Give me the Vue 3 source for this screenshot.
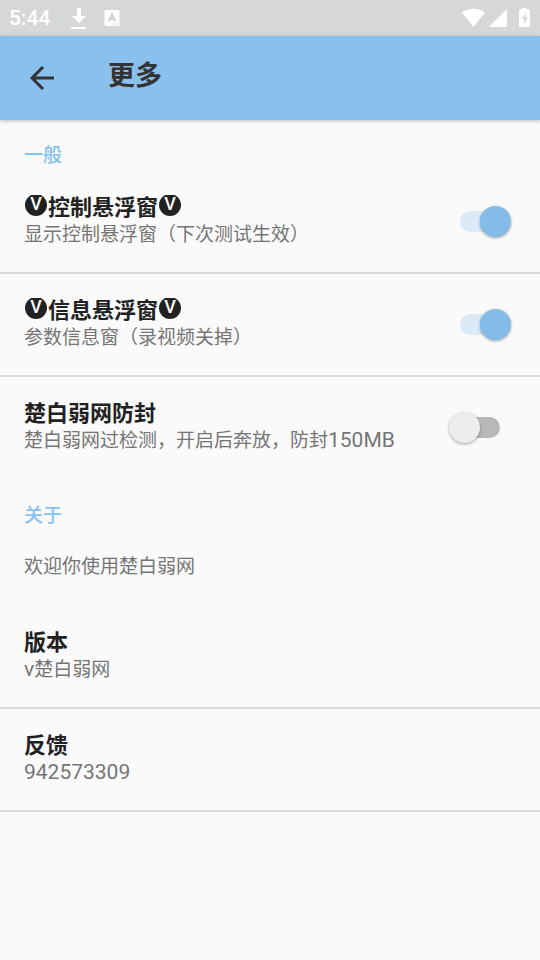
<script setup>
import { ref } from 'vue'

const general = ref([
  { id: 'control', badge: true, title: '控制悬浮窗', text: '显示控制悬浮窗（下次测试生效）', latin: '', on: true },
  { id: 'info', badge: true, title: '信息悬浮窗', text: '参数信息窗（录视频关掉）', latin: '', on: true },
  { id: 'guard', badge: false, title: '楚白弱网防封', text: '楚白弱网过检测，开启后奔放，防封', latin: '150MB', on: false },
])

const about = [
  { id: 'version', title: '版本', latin: 'v', text: '楚白弱网' },
  { id: 'feedback', title: '反馈', latin: '942573309', text: '' },
]
</script>

<template>
  <div class="screen">
    <div class="status">
      <span class="clock">5:44</span>
      <svg class="download" width="16" height="22" viewBox="0 0 16 22" fill="#fff" aria-hidden="true">
        <path d="M6 1h4v8h5l-7 7-7-7h5zM0 20h15v2H0z" />
      </svg>
      <svg width="16" height="16" viewBox="0 0 16 16" aria-hidden="true">
        <rect x="0.500" width="15" height="16" rx="1.500" fill="#fff" />
        <path d="M4.700 11.500 8 4l3.300 7.500M5.800 9h4.400" fill="none" stroke="#c9cbca" stroke-width="1.600" />
        <path d="M8 13.500h1.200v1H8zm2.300 0h1.200v1h-1.200zm2.300 0h1.200v1h-1.200z" fill="#c9cbca" />
      </svg>
      <svg class="signals" width="68" height="20" viewBox="0 0 68 20" fill="#fff" aria-hidden="true">
        <path d="M0 4.500C6.500-.5 16.500-.5 23 4.500L11.500 19z" />
        <path d="M45 1v18H26.500z" />
        <path fill-rule="evenodd" d="M59.500 0h5v1.500h2.500q1 0 1 1V18q0 1-1 1h-9q-1 0-1-1V2.500q0-1 1-1h1.500zM64 4.500 60 11h2.200v5l3.600-7h-2.400z" />
      </svg>
    </div>

    <header class="bar">
      <button class="back" type="button" aria-label="返回">
        <svg width="24" height="24" viewBox="0 0 24 24" fill="none" stroke="#333" stroke-width="3" aria-hidden="true">
          <path d="M24 12H2M13 1 2 12l11 11" />
        </svg>
      </button>
      <h1>更多</h1>
    </header>

    <main>
      <section>
        <h2>一般</h2>
        <label v-for="item in general" :key="item.id" class="row" :for="item.id">
          <span class="copy">
            <span class="title"><span v-if="item.badge" class="badge">V</span>{{ item.title }}<span v-if="item.badge" class="badge">V</span></span>
            <span class="sub">{{ item.text }}<span v-if="item.latin" class="latin">{{ item.latin }}</span></span>
          </span>
          <input :id="item.id" v-model="item.on" class="switch" type="checkbox" role="switch" />
        </label>
      </section>

      <section>
        <h2>关于</h2>
        <p class="note sub">欢迎你使用楚白弱网</p>
        <div v-for="item in about" :key="item.id" class="row">
          <span class="copy">
            <span class="title">{{ item.title }}</span>
            <span class="sub"><span class="latin">{{ item.latin }}</span>{{ item.text }}</span>
          </span>
        </div>
      </section>
    </main>
  </div>
</template>

<style>
body {
  background: #fafafa;
}
</style>

<style scoped>
.screen {
  min-height: 100vh;
  background: #fafafa;
  color: #212121;
  font-family: "Noto Sans CJK SC", sans-serif;
}

.status {
  display: flex;
  align-items: center;
  height: 36px;
  padding: 0 10px 0 9px;
  background: #d6d8d7;
  color: #fff;
}

.clock {
  width: 62px;
  font: 500 21px/36px Roboto, sans-serif;
}

.download {
  margin-right: 17px;
}

.signals {
  margin-left: auto;
}

.bar {
  display: flex;
  align-items: center;
  height: 84px;
  padding-left: 30px;
  background: #8ac0ee;
  box-shadow: 0 1px 4px rgba(0, 0, 0, 0.25);
}

.back {
  display: flex;
  width: 78px;
  padding: 0;
  border: 0;
  background: none;
  cursor: pointer;
}

h1 {
  margin: 0;
  padding-bottom: 8px;
  color: #333;
  font-size: 27px;
  font-weight: 700;
  line-height: 36px;
}

h2 {
  margin: 0;
  padding: 21px 24px 4px;
  color: #84c1f4;
  font-size: 19px;
  font-weight: 500;
  line-height: 26px;
}

.row {
  display: flex;
  align-items: center;
  justify-content: space-between;
  padding: 0 29px 0 24px;
  border-bottom: 2px solid #dadada;
}

label.row {
  cursor: pointer;
}

label.row:last-child {
  border-color: transparent;
}

.copy {
  display: flex;
  flex-direction: column;
  gap: 1px;
  padding: 20px 0 26px;
}

.title {
  display: flex;
  align-items: center;
  font-size: 22px;
  font-weight: 700;
  line-height: 28px;
}

.badge {
  width: 22px;
  height: 22px;
  margin: 0 1px;
  border-radius: 50%;
  background: #212121;
  clip-path: inset(1px 0 0);
  color: #fafafa;
  font: 500 18px/20px Roboto, sans-serif;
  text-align: center;
}

.sub {
  color: #757575;
  font-size: 19px;
  line-height: 26px;
  white-space: nowrap;
}

.latin {
  font-family: Roboto, sans-serif;
  font-size: 21px;
  line-height: 1;
}

.note {
  margin: 0;
  padding: 21px 24px 28px;
}

.switch {
  position: relative;
  flex: none;
  width: 62px;
  height: 31px;
  margin: 0;
  appearance: none;
  cursor: pointer;
}

.switch::before,
.switch::after {
  position: absolute;
  content: "";
}

.switch::before {
  inset: 5px 11px;
  border-radius: 11px;
  background: #b8b8b8;
}

.switch::after {
  top: 0;
  left: 0;
  width: 31px;
  height: 31px;
  border-radius: 50%;
  background: #ececec;
  box-shadow: 0 1px 3px rgba(0, 0, 0, 0.35);
}

.switch:checked::before {
  background: #dce9f7;
}

.switch:checked::after {
  left: 31px;
  background: #84bce8;
}
</style>
